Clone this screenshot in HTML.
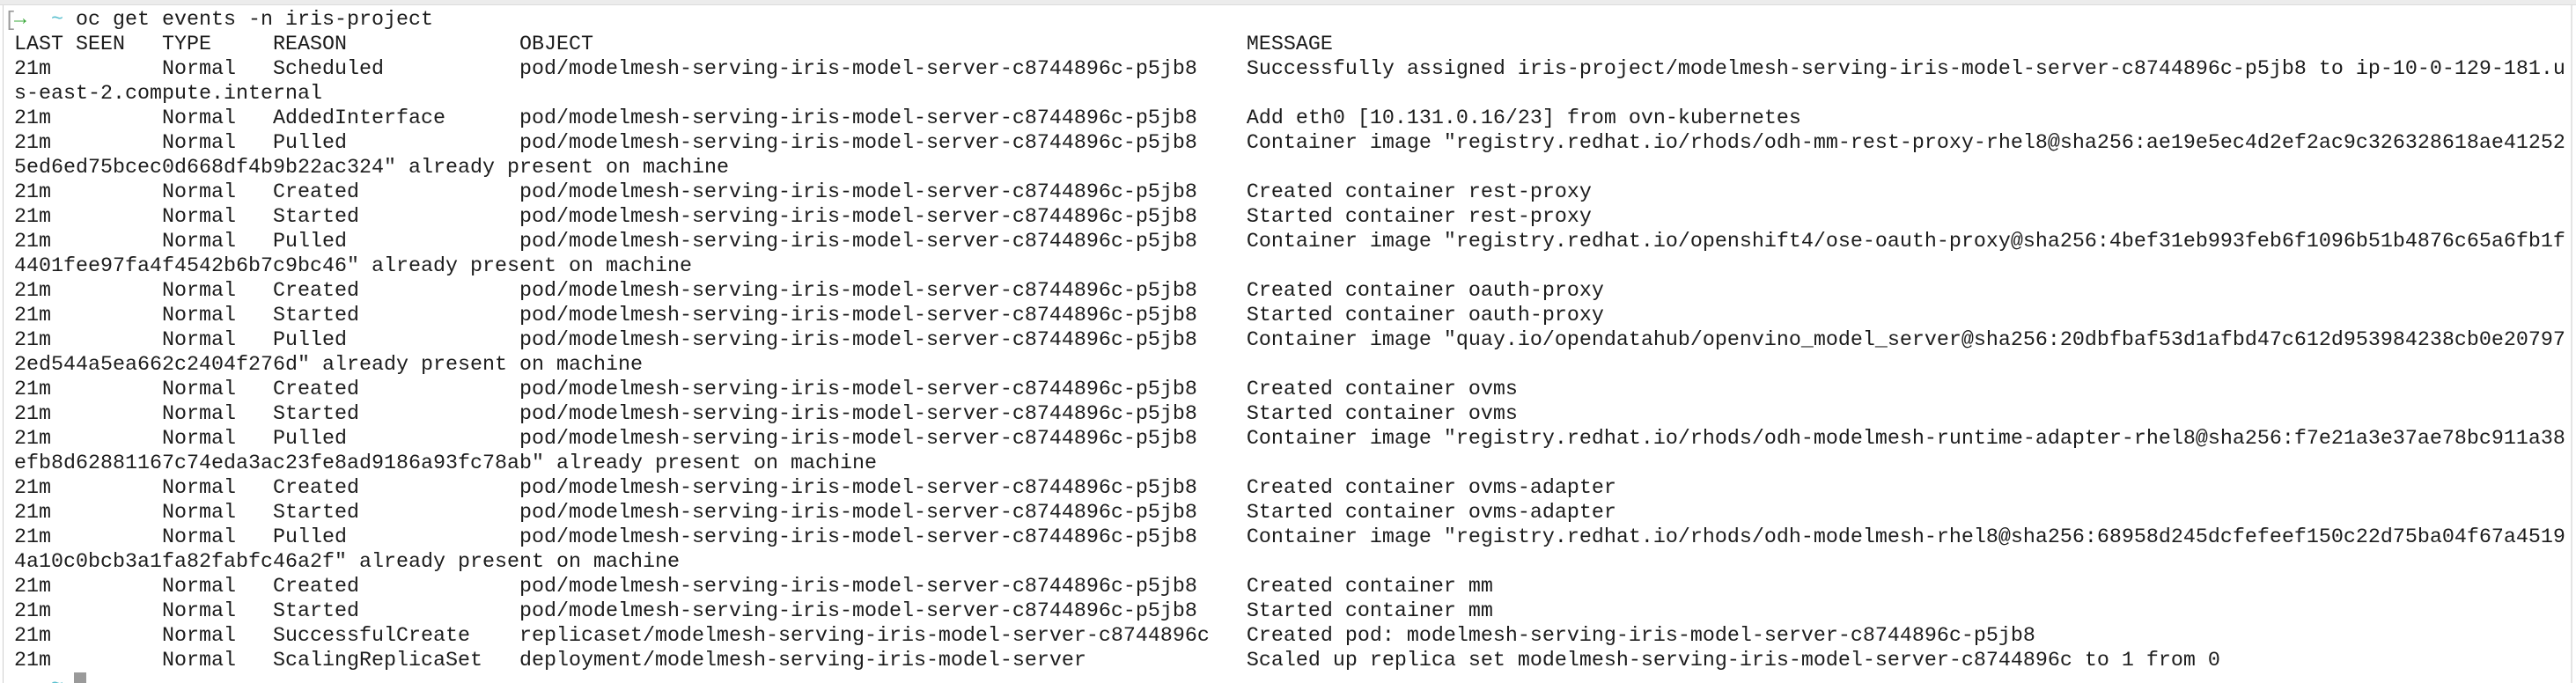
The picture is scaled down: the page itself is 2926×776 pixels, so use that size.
<!DOCTYPE html>
<html><head><meta charset="utf-8"><style>
html,body{margin:0;padding:0;background:#fff;width:2926px;height:776px;overflow:hidden;position:relative}
.top{position:absolute;left:0;top:0;width:2926px;height:5px;background:#ececec;border-bottom:1px solid #dcdcdc}
.lb{position:absolute;left:3px;top:6px;width:1px;height:770px;background:#d0d0d0}
.rb{position:absolute;right:4px;top:6px;width:2px;height:770px;background:#e4e4e4}
pre{position:absolute;left:16px;top:9px;margin:0;font-family:"Liberation Mono",monospace;font-size:23.33px;line-height:28px;color:#1c1c1c;white-space:pre}
.g{color:#3aa83a}.c{color:#5bc0cf}.br{position:absolute;left:5px;color:#999}
.cur{position:absolute;left:84px;top:764px;width:14px;height:12px;background:#9a9a9a}
</style></head><body>
<div class="top"></div><div class="lb"></div><div class="rb"></div>
<pre><span class="g">→</span>  <span class="c">~</span> oc get events -n iris-project
LAST SEEN   TYPE     REASON              OBJECT                                                     MESSAGE
21m         Normal   Scheduled           pod/modelmesh-serving-iris-model-server-c8744896c-p5jb8    Successfully assigned iris-project/modelmesh-serving-iris-model-server-c8744896c-p5jb8 to ip-10-0-129-181.u
s-east-2.compute.internal
21m         Normal   AddedInterface      pod/modelmesh-serving-iris-model-server-c8744896c-p5jb8    Add eth0 [10.131.0.16/23] from ovn-kubernetes
21m         Normal   Pulled              pod/modelmesh-serving-iris-model-server-c8744896c-p5jb8    Container image "registry.redhat.io/rhods/odh-mm-rest-proxy-rhel8@sha256:ae19e5ec4d2ef2ac9c326328618ae41252
5ed6ed75bcec0d668df4b9b22ac324" already present on machine
21m         Normal   Created             pod/modelmesh-serving-iris-model-server-c8744896c-p5jb8    Created container rest-proxy
21m         Normal   Started             pod/modelmesh-serving-iris-model-server-c8744896c-p5jb8    Started container rest-proxy
21m         Normal   Pulled              pod/modelmesh-serving-iris-model-server-c8744896c-p5jb8    Container image "registry.redhat.io/openshift4/ose-oauth-proxy@sha256:4bef31eb993feb6f1096b51b4876c65a6fb1f
4401fee97fa4f4542b6b7c9bc46" already present on machine
21m         Normal   Created             pod/modelmesh-serving-iris-model-server-c8744896c-p5jb8    Created container oauth-proxy
21m         Normal   Started             pod/modelmesh-serving-iris-model-server-c8744896c-p5jb8    Started container oauth-proxy
21m         Normal   Pulled              pod/modelmesh-serving-iris-model-server-c8744896c-p5jb8    Container image "quay.io/opendatahub/openvino_model_server@sha256:20dbfbaf53d1afbd47c612d953984238cb0e20797
2ed544a5ea662c2404f276d" already present on machine
21m         Normal   Created             pod/modelmesh-serving-iris-model-server-c8744896c-p5jb8    Created container ovms
21m         Normal   Started             pod/modelmesh-serving-iris-model-server-c8744896c-p5jb8    Started container ovms
21m         Normal   Pulled              pod/modelmesh-serving-iris-model-server-c8744896c-p5jb8    Container image "registry.redhat.io/rhods/odh-modelmesh-runtime-adapter-rhel8@sha256:f7e21a3e37ae78bc911a38
efb8d62881167c74eda3ac23fe8ad9186a93fc78ab" already present on machine
21m         Normal   Created             pod/modelmesh-serving-iris-model-server-c8744896c-p5jb8    Created container ovms-adapter
21m         Normal   Started             pod/modelmesh-serving-iris-model-server-c8744896c-p5jb8    Started container ovms-adapter
21m         Normal   Pulled              pod/modelmesh-serving-iris-model-server-c8744896c-p5jb8    Container image "registry.redhat.io/rhods/odh-modelmesh-rhel8@sha256:68958d245dcfefeef150c22d75ba04f67a4519
4a10c0bcb3a1fa82fabfc46a2f" already present on machine
21m         Normal   Created             pod/modelmesh-serving-iris-model-server-c8744896c-p5jb8    Created container mm
21m         Normal   Started             pod/modelmesh-serving-iris-model-server-c8744896c-p5jb8    Started container mm
21m         Normal   SuccessfulCreate    replicaset/modelmesh-serving-iris-model-server-c8744896c   Created pod: modelmesh-serving-iris-model-server-c8744896c-p5jb8
21m         Normal   ScalingReplicaSet   deployment/modelmesh-serving-iris-model-server             Scaled up replica set modelmesh-serving-iris-model-server-c8744896c to 1 from 0
<span class="g">→</span>  <span class="c">~</span></pre>
<div class="br" style="top:9px;font-family:'Liberation Mono',monospace;font-size:23px;line-height:28px">[</div>
<div class="cur"></div>
</body></html>
